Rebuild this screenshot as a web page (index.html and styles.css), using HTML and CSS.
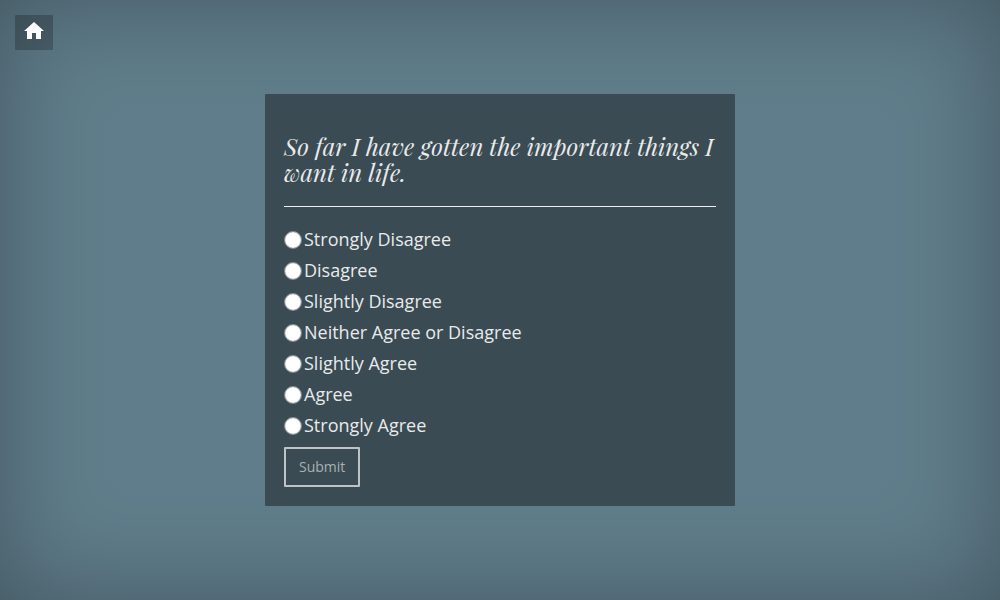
FILE: index.html
```html
<!DOCTYPE html>
<html lang="en">
<head>
  <meta charset="utf-8">
  <meta name="viewport" content="width=device-width, initial-scale=1">
  <title>Survey</title>
  <link rel="stylesheet" href="styles.css">
</head>
<body>
  <a class="home" href="#" aria-label="Home">
    <svg class="home-icon" viewBox="0 0 20 18" aria-hidden="true">
      <path d="M10 0 L0 9 H3 V17 H8 V11 H12 V17 H17 V9 H20 Z" fill="currentColor"/>
    </svg>
  </a>
  <main class="page">
    <form class="card">
      <h1 class="question" id="question">So far I have gotten the important things I want in life.</h1>
      <div class="options" role="radiogroup" aria-labelledby="question">
        <label class="option"><input class="radio" type="radio" name="answer" value="1">Strongly Disagree</label>
        <label class="option"><input class="radio" type="radio" name="answer" value="2">Disagree</label>
        <label class="option"><input class="radio" type="radio" name="answer" value="3">Slightly Disagree</label>
        <label class="option"><input class="radio" type="radio" name="answer" value="4">Neither Agree or Disagree</label>
        <label class="option"><input class="radio" type="radio" name="answer" value="5">Slightly Agree</label>
        <label class="option"><input class="radio" type="radio" name="answer" value="6">Agree</label>
        <label class="option"><input class="radio" type="radio" name="answer" value="7">Strongly Agree</label>
      </div>
      <button class="submit" type="submit">Submit</button>
    </form>
  </main>
</body>
</html>
```
FILE: styles.css
```css
* {
  box-sizing: border-box;
}

body {
  margin: 0;
  background: #607d8b;
  color: #e8eaeb;
  font-family: "Open Sans", "Noto Sans", sans-serif;
  font-size: 18px;
}

.page {
  display: flex;
  align-items: center;
  justify-content: center;
  min-height: 100vh;
  padding: 16px;
  box-shadow: inset 0 0 100px rgba(0, 0, 0, 0.3);
}

.home {
  position: absolute;
  top: 15px;
  left: 15px;
  padding: 7px 9px 10px;
  border-radius: 1px;
  background: rgba(0, 0, 0, 0.22);
  color: #fff;
}

.home-icon {
  display: block;
  width: 20px;
  height: 18px;
}

.card {
  width: 100%;
  max-width: 470px;
  padding: 39px 19px 19px;
  border-radius: 1px;
  background: #3a4b53;
}

.question {
  margin: 0 0 17px;
  padding-bottom: 21px;
  border-bottom: 1px solid #eceff1;
  font-family: "Playfair Display", "Liberation Serif", serif;
  font-size: 24px;
  font-style: italic;
  font-weight: 400;
  line-height: 26px;
}

.options {
  display: grid;
  margin-bottom: 6px;
}

.option {
  display: flex;
  align-items: center;
  gap: 2px;
  line-height: 31px;
}

.radio {
  appearance: none;
  width: 18px;
  height: 18px;
  margin: 0;
  border: 1px solid #7d878c;
  border-radius: 50%;
  background: #fff;
  box-shadow: inset 0 0 1px #9b9fa2;
}

.radio:checked {
  border-width: 5px;
}

.submit {
  display: block;
  padding: 8px 13px;
  border: 2px solid #bfc3c6;
  border-radius: 1px;
  background: transparent;
  color: #a9b1b5;
  font-family: inherit;
  font-size: 14px;
  line-height: 20px;
}
```
